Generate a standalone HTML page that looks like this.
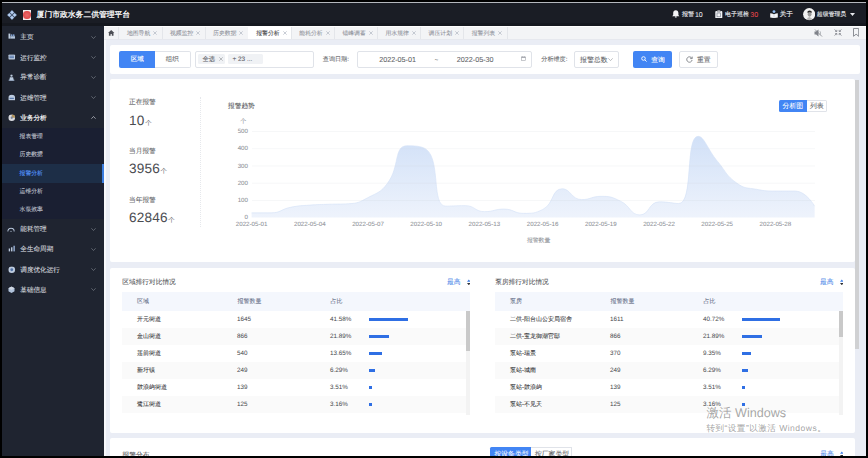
<!DOCTYPE html><html><head><meta charset="utf-8"><style>
html,body{margin:0;padding:0;width:868px;height:458px;overflow:hidden;background:#000;font-family:"Liberation Sans",sans-serif}
.r,.t{position:absolute;box-sizing:content-box}
.t{white-space:nowrap;text-rendering:geometricPrecision;-webkit-text-stroke:0.06px currentColor}
.d{-webkit-text-stroke:0.12px currentColor}
</style></head><body>
<div class="r" style="left:2px;top:2px;width:864.00px;height:1.00px;background:#b4b7bd;"></div>
<div class="r" style="left:2px;top:3px;width:864.00px;height:23.00px;background:#1a1d25;"></div>
<div class="r" style="left:2px;top:23px;width:864.00px;height:3.00px;background:#15181f;"></div>
<div class="r" style="left:2px;top:26px;width:102.00px;height:430.00px;background:#1f2430;"></div>
<div class="r" style="left:104px;top:26px;width:762.00px;height:430.00px;background:#eaedf5;"></div>
<div class="r" style="left:104px;top:26px;width:2.00px;height:430.00px;background:#f7f8fb;"></div>
<svg class="r" style="left:6.5px;top:9.8px" width="10" height="10" viewBox="0 0 10 10">
<g fill="#b7d0f2" stroke="#7fa6dc" stroke-width="0.3"><path d="M5 0.3L7.1 2.4 5 4.5 2.9 2.4z"/><path d="M5 5.5L7.1 7.6 5 9.7 2.9 7.6z"/><path d="M0.3 5L2.4 2.9 4.5 5 2.4 7.1z"/><path d="M5.5 5L7.6 2.9 9.7 5 7.6 7.1z"/></g></svg>
<div class="r" style="left:22.9px;top:9.7px;width:8px;height:10.1px;background:#f2eeee"></div>
<div class="r" style="left:23.2px;top:10.6px;width:7.4px;height:8.2px;border-radius:45%;background:radial-gradient(circle,#e86a6a 0,#df4f50 60%,#e27373 100%)"></div>
<div class="t" style="left:36.60px;top:9.10px;font-size:7.8px;line-height:12px;color:#ffffff;font-weight:normal;-webkit-text-stroke:0.25px #fff">厦门市政水务二供管理平台</div>
<svg class="r" style="left:672.2px;top:10.3px" width="7.6" height="7.6" viewBox="0 0 7.6 7.6"><path d="M3.8 0.2c-1.7 0-2.6 1.3-2.6 2.9v1.9L0.2 6.3h7.2L6.4 5V3.1C6.4 1.5 5.5 0.2 3.8 0.2z" fill="#f4f5f8"/><ellipse cx="3.8" cy="6.9" rx="1" ry="0.7" fill="#f4f5f8"/></svg>
<div class="t d" style="left:682.00px;top:9.90px;font-size:6.1px;line-height:10px;color:#e8eaee;font-weight:normal;">报警</div>
<div class="t" style="left:694.94px;top:9.50px;font-size:7.0px;line-height:11px;color:#e8eaee;font-weight:normal;">10</div>
<svg class="r" style="left:715px;top:9.8px" width="7.6" height="8.6" viewBox="0 0 7.6 8.6"><rect x="0.3" y="0.9" width="7" height="7.5" rx="1" fill="#f4f5f8"/><rect x="2.2" y="0.2" width="3.2" height="1.6" rx="0.5" fill="#f4f5f8" stroke="#1a1d25" stroke-width="0.4"/><rect x="2" y="3" width="3.6" height="3.8" fill="none" stroke="#6b7280" stroke-width="0.6"/></svg>
<div class="t d" style="left:725.00px;top:9.90px;font-size:6.0px;line-height:10px;color:#e8eaee;font-weight:normal;">电子巡检</div>
<div class="t" style="left:750.24px;top:9.50px;font-size:7.0px;line-height:11px;color:#e8474c;font-weight:normal;">30</div>
<svg class="r" style="left:769.6px;top:9.9px" width="8" height="8.2" viewBox="0 0 8 8.2"><circle cx="4" cy="1.6" r="1.4" fill="#8fbcf0"/><path d="M0.2 3.2Q2 3.3 4 4.3Q6 3.3 7.8 3.2V7.6Q6 7.6 4 8.2Q2 7.6 0.2 7.6z" fill="#f4f5f8"/><path d="M4 4.3V8.2" stroke="#9aa8bd" stroke-width="0.4"/></svg>
<div class="t d" style="left:779.70px;top:9.40px;font-size:6.6px;line-height:11px;color:#e8eaee;font-weight:normal;">关于</div>
<svg class="r" style="left:802.8px;top:8.2px" width="12.4" height="12.4" viewBox="0 0 12.4 12.4"><defs><clipPath id="av"><circle cx="6.2" cy="6.2" r="6.1"/></clipPath></defs><g clip-path="url(#av)"><rect width="12.4" height="12.4" fill="#f2f2f2"/><ellipse cx="6.6" cy="4" rx="2.2" ry="1.6" fill="#262626"/><ellipse cx="6.6" cy="6.3" rx="1.9" ry="2.4" fill="#9a9a9a"/><path d="M3 12.4Q5 8.5 7 9.2T10.5 12.4z" fill="#b8b8b8"/></g></svg>
<div class="t d" style="left:816.80px;top:10.00px;font-size:5.9px;line-height:10px;color:#e8eaee;font-weight:normal;">超级管理员</div>
<svg class="r" style="left:850px;top:13px" width="5" height="3" viewBox="0 0 5 3"><path d="M0 0h5L2.5 3z" fill="#e8eaee"/></svg>
<div class="r" style="left:104px;top:26px;width:762.00px;height:1.30px;background:#ffffff;"></div>
<div class="r" style="left:104px;top:27.3px;width:762.00px;height:11.30px;background:#f3f4f6;"></div>
<div class="r" style="left:104px;top:38.6px;width:762.00px;height:0.70px;background:#e6e8ee;"></div>
<svg class="r" style="left:108.3px;top:30px" width="6.4" height="5.8" viewBox="0 0 6.4 5.8"><path d="M3.2 0L0 2.9h0.9v2.9h1.7V4h1.2v1.8h1.7V2.9h0.9z" fill="#4d4f55"/></svg>
<div class="r" style="left:118.3px;top:27.3px;width:0.60px;height:11.30px;background:#e4e6ea;"></div>
<div class="t" style="left:126.90px;top:28.60px;font-size:5.85px;line-height:10px;color:#8d9099;font-weight:normal;">地图导航</div>
<svg class="r" style="left:153.20px;top:31px" width="4" height="4" viewBox="0 0 4 4"><path d="M0.3 0.3L3.7 3.7M3.7 0.3L0.3 3.7" stroke="#a6adba" stroke-width="0.6"/></svg>
<div class="r" style="left:161.7px;top:27.3px;width:0.60px;height:11.30px;background:#e4e6ea;"></div>
<div class="t" style="left:170.00px;top:28.60px;font-size:5.85px;line-height:10px;color:#8d9099;font-weight:normal;">视频监控</div>
<svg class="r" style="left:196.30px;top:31px" width="4" height="4" viewBox="0 0 4 4"><path d="M0.3 0.3L3.7 3.7M3.7 0.3L0.3 3.7" stroke="#a6adba" stroke-width="0.6"/></svg>
<div class="r" style="left:204.79999999999998px;top:27.3px;width:0.60px;height:11.30px;background:#e4e6ea;"></div>
<div class="t" style="left:213.10px;top:28.60px;font-size:5.85px;line-height:10px;color:#8d9099;font-weight:normal;">历史数据</div>
<svg class="r" style="left:239.40px;top:31px" width="4" height="4" viewBox="0 0 4 4"><path d="M0.3 0.3L3.7 3.7M3.7 0.3L0.3 3.7" stroke="#a6adba" stroke-width="0.6"/></svg>
<div class="r" style="left:247.9px;top:27.3px;width:0.60px;height:11.30px;background:#e4e6ea;"></div>
<div class="r" style="left:248.20000000000002px;top:27.3px;width:42.80px;height:11.30px;background:#ffffff;"></div>
<div class="t" style="left:256.20px;top:28.60px;font-size:5.85px;line-height:10px;color:#2f3033;font-weight:normal;">报警分析</div>
<svg class="r" style="left:282.50px;top:31px" width="4" height="4" viewBox="0 0 4 4"><path d="M0.3 0.3L3.7 3.7M3.7 0.3L0.3 3.7" stroke="#a6adba" stroke-width="0.6"/></svg>
<div class="r" style="left:291.0px;top:27.3px;width:0.60px;height:11.30px;background:#e4e6ea;"></div>
<div class="t" style="left:299.30px;top:28.60px;font-size:5.85px;line-height:10px;color:#8d9099;font-weight:normal;">能耗分析</div>
<svg class="r" style="left:325.60px;top:31px" width="4" height="4" viewBox="0 0 4 4"><path d="M0.3 0.3L3.7 3.7M3.7 0.3L0.3 3.7" stroke="#a6adba" stroke-width="0.6"/></svg>
<div class="r" style="left:334.1px;top:27.3px;width:0.60px;height:11.30px;background:#e4e6ea;"></div>
<div class="t" style="left:342.40px;top:28.60px;font-size:5.85px;line-height:10px;color:#8d9099;font-weight:normal;">错峰调蓄</div>
<svg class="r" style="left:368.70px;top:31px" width="4" height="4" viewBox="0 0 4 4"><path d="M0.3 0.3L3.7 3.7M3.7 0.3L0.3 3.7" stroke="#a6adba" stroke-width="0.6"/></svg>
<div class="r" style="left:377.20000000000005px;top:27.3px;width:0.60px;height:11.30px;background:#e4e6ea;"></div>
<div class="t" style="left:385.50px;top:28.60px;font-size:5.85px;line-height:10px;color:#8d9099;font-weight:normal;">用水规律</div>
<svg class="r" style="left:411.80px;top:31px" width="4" height="4" viewBox="0 0 4 4"><path d="M0.3 0.3L3.7 3.7M3.7 0.3L0.3 3.7" stroke="#a6adba" stroke-width="0.6"/></svg>
<div class="r" style="left:420.30000000000007px;top:27.3px;width:0.60px;height:11.30px;background:#e4e6ea;"></div>
<div class="t" style="left:428.60px;top:28.60px;font-size:5.85px;line-height:10px;color:#8d9099;font-weight:normal;">调压计划</div>
<svg class="r" style="left:454.90px;top:31px" width="4" height="4" viewBox="0 0 4 4"><path d="M0.3 0.3L3.7 3.7M3.7 0.3L0.3 3.7" stroke="#a6adba" stroke-width="0.6"/></svg>
<div class="r" style="left:463.4px;top:27.3px;width:0.60px;height:11.30px;background:#e4e6ea;"></div>
<div class="t" style="left:471.70px;top:28.60px;font-size:5.85px;line-height:10px;color:#8d9099;font-weight:normal;">报警列表</div>
<svg class="r" style="left:498.00px;top:31px" width="4" height="4" viewBox="0 0 4 4"><path d="M0.3 0.3L3.7 3.7M3.7 0.3L0.3 3.7" stroke="#a6adba" stroke-width="0.6"/></svg>
<div class="r" style="left:506.5px;top:27.3px;width:0.60px;height:11.30px;background:#e4e6ea;"></div>
<svg class="r" style="left:814px;top:29px" width="9" height="8" viewBox="0 0 9 8"><path d="M0.5 2.6h1.6L4.5 0.6v6.8L2.1 5.4H0.5z" fill="#80838a"/><path d="M6 2.2q1.2 1.8 0 3.6" stroke="#9a9da4" stroke-width="0.7" fill="none"/><path d="M1 0.5L8 7.5" stroke="#80838a" stroke-width="0.8"/></svg>
<svg class="r" style="left:833.5px;top:29.3px" width="8" height="7" viewBox="0 0 8 7"><g stroke="#80838a" stroke-width="0.8" fill="none"><path d="M0.5 0.5L2.6 2.4M2.8 0.9v1.6H1.2"/><path d="M7.5 0.5L5.4 2.4M5.2 0.9v1.6h1.6"/><path d="M0.5 6.5L2.6 4.6M2.8 6.1V4.5H1.2"/><path d="M7.5 6.5L5.4 4.6M5.2 6.1V4.5h1.6"/></g></svg>
<svg class="r" style="left:853.2px;top:28.2px" width="6.2" height="8.8" viewBox="0 0 6.2 8.8"><path d="M0.5 0.5h5.2v7.8L3.1 6.2 0.5 8.3z" stroke="#80838a" stroke-width="0.9" fill="none"/></svg>
<div class="r" style="left:109.5px;top:44.5px;width:750.5px;height:29.3px;background:#fff;border-radius:2px"></div>
<div class="r" style="left:119.1px;top:50.8px;width:36px;height:17.1px;background:#4285f4;border-radius:2px 0 0 2px"></div>
<div class="r" style="left:155.1px;top:50.8px;width:34.5px;height:15.1px;border:1px solid #e0e3e9;border-left:none;border-radius:0 2px 2px 0"></div>
<div class="t d" style="left:130.70px;top:55.20px;font-size:6.5px;line-height:10px;color:#ffffff;font-weight:normal;">区域</div>
<div class="t" style="left:165.70px;top:55.20px;font-size:6.5px;line-height:10px;color:#606266;font-weight:normal;">组织</div>
<div class="r" style="left:194.6px;top:50.6px;width:117.5px;height:15.1px;border:1px solid #e0e3e9;border-radius:2px"></div>
<div class="r" style="left:197.8px;top:53.8px;width:27.2px;height:10.6px;background:#f0f2f5;border-radius:1.5px"></div>
<div class="r" style="left:227.8px;top:53.8px;width:35.5px;height:10.6px;background:#f0f2f5;border-radius:1.5px"></div>
<div class="t" style="left:202.40px;top:54.70px;font-size:6.3px;line-height:10px;color:#5d6068;font-weight:normal;">全选</div>
<svg class="r" style="left:219px;top:57px" width="4" height="4" viewBox="0 0 4 4"><path d="M0.3 0.3L3.7 3.7M3.7 0.3L0.3 3.7" stroke="#909399" stroke-width="0.6"/></svg>
<div class="t" style="left:232.38px;top:54.70px;font-size:6.5px;line-height:10px;color:#5d6068;font-weight:normal;">+ 23 ...</div>
<div class="t" style="left:322.80px;top:54.80px;font-size:6.1px;line-height:10px;color:#606266;font-weight:normal;">查询日期:</div>
<div class="r" style="left:356.6px;top:50.6px;width:173.4px;height:15.1px;border:1px solid #e0e3e9;border-radius:2px"></div>
<div class="t" style="left:379.22px;top:53.90px;font-size:7.2px;line-height:12px;color:#606266;font-weight:normal;">2022-05-01</div>
<div class="t" style="left:434.48px;top:55.60px;font-size:6.5px;line-height:10px;color:#606266;font-weight:normal;">~</div>
<div class="t" style="left:456.82px;top:53.90px;font-size:7.2px;line-height:12px;color:#606266;font-weight:normal;">2022-05-30</div>
<svg class="r" style="left:521px;top:56.3px" width="5" height="5" viewBox="0 0 5 5"><rect x="0.4" y="0.9" width="4.2" height="3.7" fill="none" stroke="#a3a6ad" stroke-width="0.6"/><rect x="0.4" y="0.9" width="4.2" height="1" fill="#a3a6ad"/><path d="M1.5 0.2v1M3.5 0.2v1" stroke="#a3a6ad" stroke-width="0.5"/></svg>
<div class="t" style="left:541.30px;top:54.80px;font-size:6.1px;line-height:10px;color:#606266;font-weight:normal;">分析维度:</div>
<div class="r" style="left:574.2px;top:50.6px;width:42.9px;height:15.1px;border:1px solid #e0e3e9;border-radius:2px"></div>
<div class="t" style="left:580.00px;top:54.70px;font-size:6.9px;line-height:11px;color:#606266;font-weight:normal;">报警总数</div>
<svg class="r" style="left:607.8px;top:58px" width="5" height="3" viewBox="0 0 5 3"><path d="M0.3 0.3L2.5 2.6 4.7 0.3" stroke="#909399" stroke-width="0.6" fill="none"/></svg>
<div class="r" style="left:632.8px;top:50.6px;width:39.4px;height:17.3px;background:#4285f4;border-radius:2px"></div>
<svg class="r" style="left:640.5px;top:56.3px" width="6" height="6" viewBox="0 0 6 6"><circle cx="2.5" cy="2.5" r="1.8" stroke="#fff" stroke-width="0.9" fill="none"/><path d="M3.8 3.8L5.6 5.6" stroke="#fff" stroke-width="0.9"/></svg>
<div class="t d" style="left:651.30px;top:54.60px;font-size:6.8px;line-height:11px;color:#ffffff;font-weight:normal;">查询</div>
<div class="r" style="left:678.6px;top:50.6px;width:37.1px;height:15.3px;border:1px solid #e0e3e9;border-radius:2px"></div>
<svg class="r" style="left:686px;top:56px" width="7" height="7" viewBox="0 0 7 7"><path d="M5.8 2.2A2.7 2.7 0 1 0 6.1 4" stroke="#707378" stroke-width="0.8" fill="none"/><path d="M6.2 0.6v2H4.2" stroke="#707378" stroke-width="0.8" fill="none"/></svg>
<div class="t" style="left:697.00px;top:54.60px;font-size:6.8px;line-height:11px;color:#606266;font-weight:normal;">重置</div>
<div class="r" style="left:855.3px;top:80px;width:4.20px;height:268.50px;background:#d0d1d3;"></div>
<div class="r" style="left:109.5px;top:79.3px;width:745.5px;height:182.8px;background:#fff;border-radius:2px"></div>
<div class="r" style="left:109.5px;top:268.2px;width:745.5px;height:164.5px;background:#fff;border-radius:2px"></div>
<div class="r" style="left:109.5px;top:437.8px;width:745.5px;height:30px;background:#fff;border-radius:2px"></div>
<div class="r" style="left:2px;top:128px;width:102.00px;height:91.00px;background:#1a1f32;"></div>
<div class="r" style="left:2px;top:164px;width:100.00px;height:18.60px;background:#1d2e47;"></div>
<div class="r" style="left:102px;top:164px;width:2.00px;height:18.60px;background:#3b7de0;"></div>
<div class="t d" style="left:20.30px;top:32.20px;font-size:6.6px;line-height:11px;color:#ced1d8;font-weight:normal;">主页</div>
<svg class="r" style="left:91px;top:35.6px" width="5" height="3" viewBox="0 0 5 3"><path d="M0.4 0.3L2.5 2.5 4.6 0.3" stroke="#7a7f88" stroke-width="0.7" fill="none"/></svg>
<div class="t d" style="left:20.30px;top:52.50px;font-size:6.6px;line-height:11px;color:#ced1d8;font-weight:normal;">运行监控</div>
<svg class="r" style="left:91px;top:55.9px" width="5" height="3" viewBox="0 0 5 3"><path d="M0.4 0.3L2.5 2.5 4.6 0.3" stroke="#7a7f88" stroke-width="0.7" fill="none"/></svg>
<div class="t d" style="left:20.30px;top:72.30px;font-size:6.6px;line-height:11px;color:#ced1d8;font-weight:normal;">异常诊断</div>
<svg class="r" style="left:91px;top:75.7px" width="5" height="3" viewBox="0 0 5 3"><path d="M0.4 0.3L2.5 2.5 4.6 0.3" stroke="#7a7f88" stroke-width="0.7" fill="none"/></svg>
<div class="t d" style="left:20.30px;top:92.70px;font-size:6.6px;line-height:11px;color:#ced1d8;font-weight:normal;">运维管理</div>
<svg class="r" style="left:91px;top:96.1px" width="5" height="3" viewBox="0 0 5 3"><path d="M0.4 0.3L2.5 2.5 4.6 0.3" stroke="#7a7f88" stroke-width="0.7" fill="none"/></svg>
<div class="t d" style="left:20.30px;top:112.90px;font-size:6.6px;line-height:11px;color:#ffffff;font-weight:normal;-webkit-text-stroke:0.15px #fff">业务分析</div>
<svg class="r" style="left:91px;top:116.3px" width="5" height="3" viewBox="0 0 5 3"><path d="M0.4 2.7L2.5 0.5 4.6 2.7" stroke="#c8ccd4" stroke-width="0.7" fill="none"/></svg>
<div class="t d" style="left:20.30px;top:224.40px;font-size:6.6px;line-height:11px;color:#ced1d8;font-weight:normal;">能耗管理</div>
<svg class="r" style="left:91px;top:227.8px" width="5" height="3" viewBox="0 0 5 3"><path d="M0.4 0.3L2.5 2.5 4.6 0.3" stroke="#7a7f88" stroke-width="0.7" fill="none"/></svg>
<div class="t d" style="left:20.30px;top:244.30px;font-size:6.6px;line-height:11px;color:#ced1d8;font-weight:normal;">全生命周期</div>
<svg class="r" style="left:91px;top:247.7px" width="5" height="3" viewBox="0 0 5 3"><path d="M0.4 0.3L2.5 2.5 4.6 0.3" stroke="#7a7f88" stroke-width="0.7" fill="none"/></svg>
<div class="t d" style="left:20.30px;top:264.60px;font-size:6.6px;line-height:11px;color:#ced1d8;font-weight:normal;">调度优化运行</div>
<svg class="r" style="left:91px;top:268.0px" width="5" height="3" viewBox="0 0 5 3"><path d="M0.4 0.3L2.5 2.5 4.6 0.3" stroke="#7a7f88" stroke-width="0.7" fill="none"/></svg>
<div class="t d" style="left:20.30px;top:284.70px;font-size:6.6px;line-height:11px;color:#ced1d8;font-weight:normal;">基础信息</div>
<svg class="r" style="left:91px;top:288.1px" width="5" height="3" viewBox="0 0 5 3"><path d="M0.4 0.3L2.5 2.5 4.6 0.3" stroke="#7a7f88" stroke-width="0.7" fill="none"/></svg>
<div class="t d" style="left:19.60px;top:132.00px;font-size:5.8px;line-height:10px;color:#b9bdc6;font-weight:normal;">报表管理</div>
<div class="t d" style="left:19.60px;top:150.20px;font-size:5.8px;line-height:10px;color:#b9bdc6;font-weight:normal;">历史数据</div>
<div class="t d" style="left:19.60px;top:168.90px;font-size:5.8px;line-height:10px;color:#5393fa;font-weight:normal;">报警分析</div>
<div class="t d" style="left:19.60px;top:186.80px;font-size:5.8px;line-height:10px;color:#b9bdc6;font-weight:normal;">运维分析</div>
<div class="t d" style="left:19.60px;top:205.10px;font-size:5.8px;line-height:10px;color:#b9bdc6;font-weight:normal;">水泵效率</div>
<svg class="r" style="transform:scale(0.95);opacity:0.88;left:7.5px;top:33.2px" width="7.5" height="6.2" viewBox="0 0 7.5 6.2"><rect x="0.2" y="0.3" width="2" height="5.7" fill="#d6e6fa"/><rect x="2.2" y="3.2" width="5" height="2.8" fill="#c9dcf4"/><circle cx="3.6" cy="2.2" r="1" fill="#8fb3e6"/><circle cx="5.8" cy="2.2" r="1" fill="#8fb3e6"/></svg>
<svg class="r" style="transform:scale(0.95);opacity:0.88;left:7.5px;top:54px" width="7.5" height="6.5" viewBox="0 0 7.5 6.5"><rect x="0.2" y="0.3" width="7" height="5.2" rx="0.8" fill="#d3e3f8"/><rect x="1.3" y="1.6" width="4.8" height="1" fill="#5b7fb8"/><rect x="1.3" y="3.2" width="4.8" height="1" fill="#5b7fb8"/></svg>
<svg class="r" style="transform:scale(0.95);opacity:0.88;left:8px;top:73.5px" width="7" height="7" viewBox="0 0 7 7"><circle cx="3.5" cy="1.6" r="1.2" fill="#d3e3f8"/><path d="M1 6.8L1.8 3.3h3.4L6 6.8z" fill="#d3e3f8"/><rect x="0.3" y="5.9" width="6.4" height="1" fill="#b9cfee"/></svg>
<svg class="r" style="transform:scale(0.95);opacity:0.88;left:7.5px;top:94px" width="7.5" height="7" viewBox="0 0 7.5 7"><path d="M0.3 6.5V3.5A3.45 3 0 0 1 7.2 3.5V6.5z" fill="#d3e3f8"/><rect x="1.5" y="3.8" width="4.5" height="1.2" fill="#5b7fb8"/></svg>
<svg class="r" style="transform:scale(0.95);opacity:0.88;left:7.5px;top:114px" width="7.5" height="7.5" viewBox="0 0 7.5 7.5"><circle cx="3.75" cy="3.75" r="3.5" fill="#f2f4f8"/><path d="M3.75 3.75V0.25A3.5 3.5 0 0 1 7.25 3.75z" fill="#c9a45e"/><circle cx="3.75" cy="3.75" r="1.2" fill="#8a93a6"/></svg>
<svg class="r" style="transform:scale(0.95);opacity:0.88;left:7.3px;top:226.5px" width="8" height="5" viewBox="0 0 8 5"><path d="M0.6 4.6A3.4 3.4 0 0 1 7.4 4.6" stroke="#d3e3f8" stroke-width="1.1" fill="none"/><circle cx="4" cy="4.4" r="0.6" fill="#d3e3f8"/></svg>
<svg class="r" style="transform:scale(0.95);opacity:0.88;left:7.5px;top:245px" width="7.5" height="7" viewBox="0 0 7.5 7"><rect x="0.5" y="3.5" width="1.5" height="3.2" fill="#d3e3f8"/><rect x="3" y="2.2" width="1.5" height="4.5" fill="#d3e3f8"/><rect x="5.5" y="0.5" width="1.5" height="6.2" fill="#a9c4ec"/></svg>
<svg class="r" style="transform:scale(0.95);opacity:0.88;left:7.5px;top:266px" width="7.5" height="7.5" viewBox="0 0 7.5 7.5"><circle cx="3.75" cy="3.75" r="3.5" fill="#d3e3f8"/><circle cx="3.75" cy="3.75" r="1.5" fill="#5b7fb8"/></svg>
<svg class="r" style="transform:scale(0.95);opacity:0.88;left:7.8px;top:285.8px" width="7" height="7.5" viewBox="0 0 7 7.5"><path d="M3.5 0.3L6.8 2.2V5.3L3.5 7.2 0.2 5.3V2.2z" fill="#c5d8f3"/><path d="M3.5 0.3L6.8 2.2 3.5 4.1 0.2 2.2z" fill="#e8f0fb"/></svg>
<div class="t" style="left:129.00px;top:96.80px;font-size:6.7px;line-height:11px;color:#606266;font-weight:normal;">正在报警</div>
<div class="t" style="left:129.11px;top:106.80px;font-size:13.6px;line-height:27.2px;color:#4a4c51;letter-spacing:0.15px;-webkit-text-stroke:0">10<span style="font-size:6.5px;color:#606266;margin-left:0.6px">个</span></div>
<div class="t" style="left:129.00px;top:145.90px;font-size:6.7px;line-height:11px;color:#606266;font-weight:normal;">当月报警</div>
<div class="t" style="left:129.11px;top:154.90px;font-size:13.6px;line-height:27.2px;color:#4a4c51;letter-spacing:0.15px;-webkit-text-stroke:0">3956<span style="font-size:6.5px;color:#606266;margin-left:0.6px">个</span></div>
<div class="t" style="left:129.00px;top:194.60px;font-size:6.7px;line-height:11px;color:#606266;font-weight:normal;">当年报警</div>
<div class="t" style="left:129.11px;top:203.80px;font-size:13.6px;line-height:27.2px;color:#4a4c51;letter-spacing:0.15px;-webkit-text-stroke:0">62846<span style="font-size:6.5px;color:#606266;margin-left:0.6px">个</span></div>
<div class="r" style="left:199.6px;top:97px;width:0;height:130px;border-left:0.8px dotted #e6e8ec"></div>
<div class="t" style="left:228.00px;top:101.20px;font-size:6.7px;line-height:11px;color:#505255;font-weight:normal;">报警趋势</div>
<div class="t" style="left:240.20px;top:116.60px;font-size:6.0px;line-height:10px;color:#909399;font-weight:normal;">个</div>
<div class="t" style="right:620px;top:213.10px;font-size:6.2px;line-height:10px;color:#909399;text-align:right;text-rendering:geometricPrecision">0</div>
<div class="t" style="right:620px;top:195.90px;font-size:6.2px;line-height:10px;color:#909399;text-align:right;text-rendering:geometricPrecision">100</div>
<div class="t" style="right:620px;top:178.70px;font-size:6.2px;line-height:10px;color:#909399;text-align:right;text-rendering:geometricPrecision">200</div>
<div class="t" style="right:620px;top:161.50px;font-size:6.2px;line-height:10px;color:#909399;text-align:right;text-rendering:geometricPrecision">300</div>
<div class="t" style="right:620px;top:144.30px;font-size:6.2px;line-height:10px;color:#909399;text-align:right;text-rendering:geometricPrecision">400</div>
<div class="t" style="right:620px;top:127.10px;font-size:6.2px;line-height:10px;color:#909399;text-align:right;text-rendering:geometricPrecision">500</div>
<div class="t" style="left:231.60px;width:40px;text-align:center;top:219.60000000000002px;font-size:6.2px;line-height:10px;color:#909399">2022-05-01</div>
<div class="t" style="left:289.80px;width:40px;text-align:center;top:219.60000000000002px;font-size:6.2px;line-height:10px;color:#909399">2022-05-04</div>
<div class="t" style="left:348.00px;width:40px;text-align:center;top:219.60000000000002px;font-size:6.2px;line-height:10px;color:#909399">2022-05-07</div>
<div class="t" style="left:406.20px;width:40px;text-align:center;top:219.60000000000002px;font-size:6.2px;line-height:10px;color:#909399">2022-05-10</div>
<div class="t" style="left:464.40px;width:40px;text-align:center;top:219.60000000000002px;font-size:6.2px;line-height:10px;color:#909399">2022-05-13</div>
<div class="t" style="left:522.60px;width:40px;text-align:center;top:219.60000000000002px;font-size:6.2px;line-height:10px;color:#909399">2022-05-16</div>
<div class="t" style="left:580.80px;width:40px;text-align:center;top:219.60000000000002px;font-size:6.2px;line-height:10px;color:#909399">2022-05-19</div>
<div class="t" style="left:639.00px;width:40px;text-align:center;top:219.60000000000002px;font-size:6.2px;line-height:10px;color:#909399">2022-05-22</div>
<div class="t" style="left:697.20px;width:40px;text-align:center;top:219.60000000000002px;font-size:6.2px;line-height:10px;color:#909399">2022-05-25</div>
<div class="t" style="left:755.40px;width:40px;text-align:center;top:219.60000000000002px;font-size:6.2px;line-height:10px;color:#909399">2022-05-28</div>
<div class="t" style="left:527.00px;top:235.70px;font-size:5.8px;line-height:10px;color:#909399;font-weight:normal;">报警数量</div>
<svg class="r" style="left:0;top:0" width="868" height="458"><defs><linearGradient id="ag" x1="0" y1="130" x2="0" y2="217.5" gradientUnits="userSpaceOnUse"><stop offset="0" stop-color="#cfdff7"/><stop offset="1" stop-color="#eef3fc"/></linearGradient></defs>
<path d="M251.60 212.86C251.60 212.86 261.50 212.86 271.01 212.86C280.91 212.86 280.57 209.32 290.43 207.35C299.98 205.45 300.11 205.89 309.84 205.12C319.53 204.34 319.55 204.60 329.26 204.26C338.96 203.91 339.20 204.26 348.67 203.74C358.62 203.20 359.19 202.24 368.09 197.55C378.61 192.00 380.45 192.68 387.50 183.27C399.87 166.79 393.69 145.78 406.92 145.78C413.11 145.78 421.53 145.78 426.33 149.39C440.94 160.36 431.08 206.15 445.75 206.15C450.50 206.15 455.68 205.63 465.16 205.63C475.09 205.63 474.69 211.65 484.58 211.65C494.11 211.65 494.36 209.07 504.00 209.07C513.78 209.07 513.69 213.37 523.41 213.37C533.10 213.37 534.84 213.37 542.82 209.42C554.25 203.76 551.36 188.78 562.24 188.78C570.78 188.78 571.36 199.61 581.65 199.61C590.77 199.61 591.44 196.34 601.07 196.34C610.85 196.34 611.62 196.92 620.49 201.16C631.03 206.21 630.11 214.92 639.90 214.92C649.53 214.92 648.72 201.85 659.31 201.85C668.14 201.85 674.50 203.57 678.73 203.57C693.92 203.57 684.79 136.32 698.14 136.32C704.20 136.32 707.45 149.20 717.56 161.43C726.87 172.68 725.52 175.06 736.98 183.27C744.94 188.99 746.48 187.50 756.39 189.29C765.89 191.01 766.08 191.01 775.80 191.01C785.49 191.01 786.66 191.01 795.22 191.01C806.07 191.01 814.63 206.15 814.63 206.15L814.63 217.5L251.60 217.5Z" fill="url(#ag)"/><path d="M251.60 212.86C251.60 212.86 261.50 212.86 271.01 212.86C280.91 212.86 280.57 209.32 290.43 207.35C299.98 205.45 300.11 205.89 309.84 205.12C319.53 204.34 319.55 204.60 329.26 204.26C338.96 203.91 339.20 204.26 348.67 203.74C358.62 203.20 359.19 202.24 368.09 197.55C378.61 192.00 380.45 192.68 387.50 183.27C399.87 166.79 393.69 145.78 406.92 145.78C413.11 145.78 421.53 145.78 426.33 149.39C440.94 160.36 431.08 206.15 445.75 206.15C450.50 206.15 455.68 205.63 465.16 205.63C475.09 205.63 474.69 211.65 484.58 211.65C494.11 211.65 494.36 209.07 504.00 209.07C513.78 209.07 513.69 213.37 523.41 213.37C533.10 213.37 534.84 213.37 542.82 209.42C554.25 203.76 551.36 188.78 562.24 188.78C570.78 188.78 571.36 199.61 581.65 199.61C590.77 199.61 591.44 196.34 601.07 196.34C610.85 196.34 611.62 196.92 620.49 201.16C631.03 206.21 630.11 214.92 639.90 214.92C649.53 214.92 648.72 201.85 659.31 201.85C668.14 201.85 674.50 203.57 678.73 203.57C693.92 203.57 684.79 136.32 698.14 136.32C704.20 136.32 707.45 149.20 717.56 161.43C726.87 172.68 725.52 175.06 736.98 183.27C744.94 188.99 746.48 187.50 756.39 189.29C765.89 191.01 766.08 191.01 775.80 191.01C785.49 191.01 786.66 191.01 795.22 191.01C806.07 191.01 814.63 206.15 814.63 206.15" fill="none" stroke="#d3e1f7" stroke-width="0.6"/><rect x="252" y="200.00" width="563" height="0.7" fill="rgba(200,205,215,0.22)"/><rect x="252" y="182.80" width="563" height="0.7" fill="rgba(200,205,215,0.22)"/><rect x="252" y="165.60" width="563" height="0.7" fill="rgba(200,205,215,0.22)"/><rect x="252" y="148.40" width="563" height="0.7" fill="rgba(200,205,215,0.22)"/><rect x="252" y="131.20" width="563" height="0.7" fill="rgba(200,205,215,0.22)"/></svg>
<div class="r" style="left:778.9px;top:100.1px;width:27.8px;height:11.7px;background:#4285f4;border-radius:1.5px 0 0 1.5px"></div>
<div class="r" style="left:806.7px;top:100.1px;width:19.8px;height:9.9px;border:0.9px solid #e0e3e9;border-left:none;border-radius:0 1.5px 1.5px 0"></div>
<div class="t" style="left:782.50px;top:101.10px;font-size:6.9px;line-height:11px;color:#ffffff;font-weight:normal;">分析图</div>
<div class="t" style="left:809.90px;top:101.10px;font-size:6.9px;line-height:11px;color:#606266;font-weight:normal;">列表</div>
<div class="t" style="left:122.30px;top:276.60px;font-size:6.7px;line-height:11px;color:#505255;font-weight:normal;">区域排行对比情况</div>
<div class="t" style="left:447.00px;top:276.70px;font-size:6.8px;line-height:11px;color:#3f7fe8;font-weight:normal;">最高</div>
<svg class="r" style="left:466.9px;top:278.6px" width="3.6" height="6.8" viewBox="0 0 3.6 6.8"><path d="M0 2.8L1.8 0.6 3.6 2.8z" fill="#3f7fe8"/><path d="M0 4L1.8 6.2 3.6 4z" fill="#303133"/></svg>
<div class="r" style="left:122px;top:292.4px;width:348.00px;height:18.20px;background:#f4f7fd;"></div>
<div class="t" style="left:136.90px;top:296.80px;font-size:6.0px;line-height:10px;color:#5f6b85;font-weight:normal;">区域</div>
<div class="t" style="left:237.40px;top:296.80px;font-size:6.0px;line-height:10px;color:#5f6b85;font-weight:normal;">报警数量</div>
<div class="t" style="left:330.50px;top:296.80px;font-size:6.0px;line-height:10px;color:#5f6b85;font-weight:normal;">占比</div>
<div class="t" style="left:136.90px;top:314.80px;font-size:6.0px;line-height:10px;color:#303133;font-weight:normal;">开元街道</div>
<div class="t" style="left:236.90px;top:314.80px;font-size:6.3px;line-height:10px;color:#45474b;font-weight:normal;-webkit-text-stroke:0">1645</div>
<div class="t" style="left:330.00px;top:314.80px;font-size:6.3px;line-height:10px;color:#45474b;font-weight:normal;-webkit-text-stroke:0">41.58%</div>
<div class="r" style="left:369.2px;top:318.20000000000005px;width:38.59px;height:2.60px;background:#2f6fe4;"></div>
<div class="r" style="left:122px;top:327.6px;width:344.00px;height:17.00px;background:#fafafa;"></div>
<div class="t" style="left:136.90px;top:331.80px;font-size:6.0px;line-height:10px;color:#303133;font-weight:normal;">金山街道</div>
<div class="t" style="left:236.90px;top:331.80px;font-size:6.3px;line-height:10px;color:#45474b;font-weight:normal;-webkit-text-stroke:0">866</div>
<div class="t" style="left:330.00px;top:331.80px;font-size:6.3px;line-height:10px;color:#45474b;font-weight:normal;-webkit-text-stroke:0">21.89%</div>
<div class="r" style="left:369.2px;top:335.20000000000005px;width:20.31px;height:2.60px;background:#2f6fe4;"></div>
<div class="t" style="left:136.90px;top:348.80px;font-size:6.0px;line-height:10px;color:#303133;font-weight:normal;">莲前街道</div>
<div class="t" style="left:236.90px;top:348.80px;font-size:6.3px;line-height:10px;color:#45474b;font-weight:normal;-webkit-text-stroke:0">540</div>
<div class="t" style="left:330.00px;top:348.80px;font-size:6.3px;line-height:10px;color:#45474b;font-weight:normal;-webkit-text-stroke:0">13.65%</div>
<div class="r" style="left:369.2px;top:352.20000000000005px;width:12.67px;height:2.60px;background:#2f6fe4;"></div>
<div class="r" style="left:122px;top:361.6px;width:344.00px;height:17.00px;background:#fafafa;"></div>
<div class="t" style="left:136.90px;top:365.80px;font-size:6.0px;line-height:10px;color:#303133;font-weight:normal;">新圩镇</div>
<div class="t" style="left:236.90px;top:365.80px;font-size:6.3px;line-height:10px;color:#45474b;font-weight:normal;-webkit-text-stroke:0">249</div>
<div class="t" style="left:330.00px;top:365.80px;font-size:6.3px;line-height:10px;color:#45474b;font-weight:normal;-webkit-text-stroke:0">6.29%</div>
<div class="r" style="left:369.2px;top:369.20000000000005px;width:5.84px;height:2.60px;background:#2f6fe4;"></div>
<div class="t" style="left:136.90px;top:382.80px;font-size:6.0px;line-height:10px;color:#303133;font-weight:normal;">鼓浪屿街道</div>
<div class="t" style="left:236.90px;top:382.80px;font-size:6.3px;line-height:10px;color:#45474b;font-weight:normal;-webkit-text-stroke:0">139</div>
<div class="t" style="left:330.00px;top:382.80px;font-size:6.3px;line-height:10px;color:#45474b;font-weight:normal;-webkit-text-stroke:0">3.51%</div>
<div class="r" style="left:369.2px;top:386.20000000000005px;width:3.26px;height:2.60px;background:#2f6fe4;"></div>
<div class="r" style="left:122px;top:395.6px;width:344.00px;height:17.00px;background:#fafafa;"></div>
<div class="t" style="left:136.90px;top:399.80px;font-size:6.0px;line-height:10px;color:#303133;font-weight:normal;">鹭江街道</div>
<div class="t" style="left:236.90px;top:399.80px;font-size:6.3px;line-height:10px;color:#45474b;font-weight:normal;-webkit-text-stroke:0">125</div>
<div class="t" style="left:330.00px;top:399.80px;font-size:6.3px;line-height:10px;color:#45474b;font-weight:normal;-webkit-text-stroke:0">3.16%</div>
<div class="r" style="left:369.2px;top:403.20000000000005px;width:2.93px;height:2.60px;background:#2f6fe4;"></div>
<div class="r" style="left:466px;top:311px;width:4.00px;height:104.20px;background:#f3f3f3;"></div>
<div class="r" style="left:466px;top:311px;width:4.00px;height:40.00px;background:#c9c9c9;"></div>
<div class="t" style="left:495.30px;top:276.60px;font-size:6.7px;line-height:11px;color:#505255;font-weight:normal;">泵房排行对比情况</div>
<div class="t" style="left:820.00px;top:276.70px;font-size:6.8px;line-height:11px;color:#3f7fe8;font-weight:normal;">最高</div>
<svg class="r" style="left:839.9000000000001px;top:278.6px" width="3.6" height="6.8" viewBox="0 0 3.6 6.8"><path d="M0 2.8L1.8 0.6 3.6 2.8z" fill="#3f7fe8"/><path d="M0 4L1.8 6.2 3.6 4z" fill="#303133"/></svg>
<div class="r" style="left:495px;top:292.4px;width:348.00px;height:18.20px;background:#f4f7fd;"></div>
<div class="t" style="left:509.90px;top:296.80px;font-size:6.0px;line-height:10px;color:#5f6b85;font-weight:normal;">泵房</div>
<div class="t" style="left:610.40px;top:296.80px;font-size:6.0px;line-height:10px;color:#5f6b85;font-weight:normal;">报警数量</div>
<div class="t" style="left:703.50px;top:296.80px;font-size:6.0px;line-height:10px;color:#5f6b85;font-weight:normal;">占比</div>
<div class="t" style="left:509.90px;top:314.80px;font-size:6.0px;line-height:10px;color:#303133;font-weight:normal;">二供-阳台山公安局宿舍</div>
<div class="t" style="left:609.90px;top:314.80px;font-size:6.3px;line-height:10px;color:#45474b;font-weight:normal;-webkit-text-stroke:0">1611</div>
<div class="t" style="left:703.00px;top:314.80px;font-size:6.3px;line-height:10px;color:#45474b;font-weight:normal;-webkit-text-stroke:0">40.72%</div>
<div class="r" style="left:742.2px;top:318.20000000000005px;width:37.79px;height:2.60px;background:#2f6fe4;"></div>
<div class="r" style="left:495px;top:327.6px;width:344.00px;height:17.00px;background:#fafafa;"></div>
<div class="t" style="left:509.90px;top:331.80px;font-size:6.0px;line-height:10px;color:#303133;font-weight:normal;">二供-宝龙御湖官邸</div>
<div class="t" style="left:609.90px;top:331.80px;font-size:6.3px;line-height:10px;color:#45474b;font-weight:normal;-webkit-text-stroke:0">866</div>
<div class="t" style="left:703.00px;top:331.80px;font-size:6.3px;line-height:10px;color:#45474b;font-weight:normal;-webkit-text-stroke:0">21.89%</div>
<div class="r" style="left:742.2px;top:335.20000000000005px;width:20.31px;height:2.60px;background:#2f6fe4;"></div>
<div class="t" style="left:509.90px;top:348.80px;font-size:6.0px;line-height:10px;color:#303133;font-weight:normal;">泵站-瑞景</div>
<div class="t" style="left:609.90px;top:348.80px;font-size:6.3px;line-height:10px;color:#45474b;font-weight:normal;-webkit-text-stroke:0">370</div>
<div class="t" style="left:703.00px;top:348.80px;font-size:6.3px;line-height:10px;color:#45474b;font-weight:normal;-webkit-text-stroke:0">9.35%</div>
<div class="r" style="left:742.2px;top:352.20000000000005px;width:8.68px;height:2.60px;background:#2f6fe4;"></div>
<div class="r" style="left:495px;top:361.6px;width:344.00px;height:17.00px;background:#fafafa;"></div>
<div class="t" style="left:509.90px;top:365.80px;font-size:6.0px;line-height:10px;color:#303133;font-weight:normal;">泵站-城南</div>
<div class="t" style="left:609.90px;top:365.80px;font-size:6.3px;line-height:10px;color:#45474b;font-weight:normal;-webkit-text-stroke:0">249</div>
<div class="t" style="left:703.00px;top:365.80px;font-size:6.3px;line-height:10px;color:#45474b;font-weight:normal;-webkit-text-stroke:0">6.29%</div>
<div class="r" style="left:742.2px;top:369.20000000000005px;width:5.84px;height:2.60px;background:#2f6fe4;"></div>
<div class="t" style="left:509.90px;top:382.80px;font-size:6.0px;line-height:10px;color:#303133;font-weight:normal;">泵站-鼓浪屿</div>
<div class="t" style="left:609.90px;top:382.80px;font-size:6.3px;line-height:10px;color:#45474b;font-weight:normal;-webkit-text-stroke:0">139</div>
<div class="t" style="left:703.00px;top:382.80px;font-size:6.3px;line-height:10px;color:#45474b;font-weight:normal;-webkit-text-stroke:0">3.51%</div>
<div class="r" style="left:742.2px;top:386.20000000000005px;width:3.26px;height:2.60px;background:#2f6fe4;"></div>
<div class="r" style="left:495px;top:395.6px;width:344.00px;height:17.00px;background:#fafafa;"></div>
<div class="t" style="left:509.90px;top:399.80px;font-size:6.0px;line-height:10px;color:#303133;font-weight:normal;">泵站-不见天</div>
<div class="t" style="left:609.90px;top:399.80px;font-size:6.3px;line-height:10px;color:#45474b;font-weight:normal;-webkit-text-stroke:0">125</div>
<div class="t" style="left:703.00px;top:399.80px;font-size:6.3px;line-height:10px;color:#45474b;font-weight:normal;-webkit-text-stroke:0">3.16%</div>
<div class="r" style="left:742.2px;top:403.20000000000005px;width:2.93px;height:2.60px;background:#2f6fe4;"></div>
<div class="r" style="left:839px;top:311px;width:4.00px;height:104.20px;background:#f3f3f3;"></div>
<div class="r" style="left:839px;top:311px;width:4.00px;height:25.60px;background:#c9c9c9;"></div>
<div class="t" style="left:122.60px;top:449.70px;font-size:6.7px;line-height:11px;color:#505255;font-weight:normal;">报警分布</div>
<div class="r" style="left:490px;top:447px;width:40.8px;height:12px;background:#4285f4;border-radius:1.5px 0 0 0"></div>
<div class="r" style="left:530.8px;top:447px;width:40.2px;height:12px;border:0.9px solid #e0e3e9;border-left:none"></div>
<div class="t" style="left:494.50px;top:448.60px;font-size:6.8px;line-height:11px;color:#ffffff;font-weight:normal;">按设备类型</div>
<div class="t" style="left:535.00px;top:448.60px;font-size:6.8px;line-height:11px;color:#606266;font-weight:normal;">按厂家类型</div>
<div class="t" style="left:820.20px;top:448.70px;font-size:6.8px;line-height:11px;color:#3f7fe8;font-weight:normal;">最高</div>
<svg class="r" style="left:839.5px;top:450.6px" width="3.6" height="6.8" viewBox="0 0 3.6 6.8"><path d="M0 2.8L1.8 0.6 3.6 2.8z" fill="#3f7fe8"/><path d="M0 4L1.8 6.2 3.6 4z" fill="#303133"/></svg>
<div class="t" style="left:706.40px;top:403.20px;font-size:12.6px;line-height:20px;color:rgba(110,110,110,0.6);font-weight:normal;">激活 Windows</div>
<div class="t" style="left:706.40px;top:421.20px;font-size:8.6px;line-height:14px;color:rgba(110,110,110,0.6);font-weight:normal;letter-spacing:0.45px">转到“设置”以激活 Windows。</div>
<div class="r" style="left:0px;top:456px;width:868.00px;height:2.00px;background:#000;"></div>
</body></html>
